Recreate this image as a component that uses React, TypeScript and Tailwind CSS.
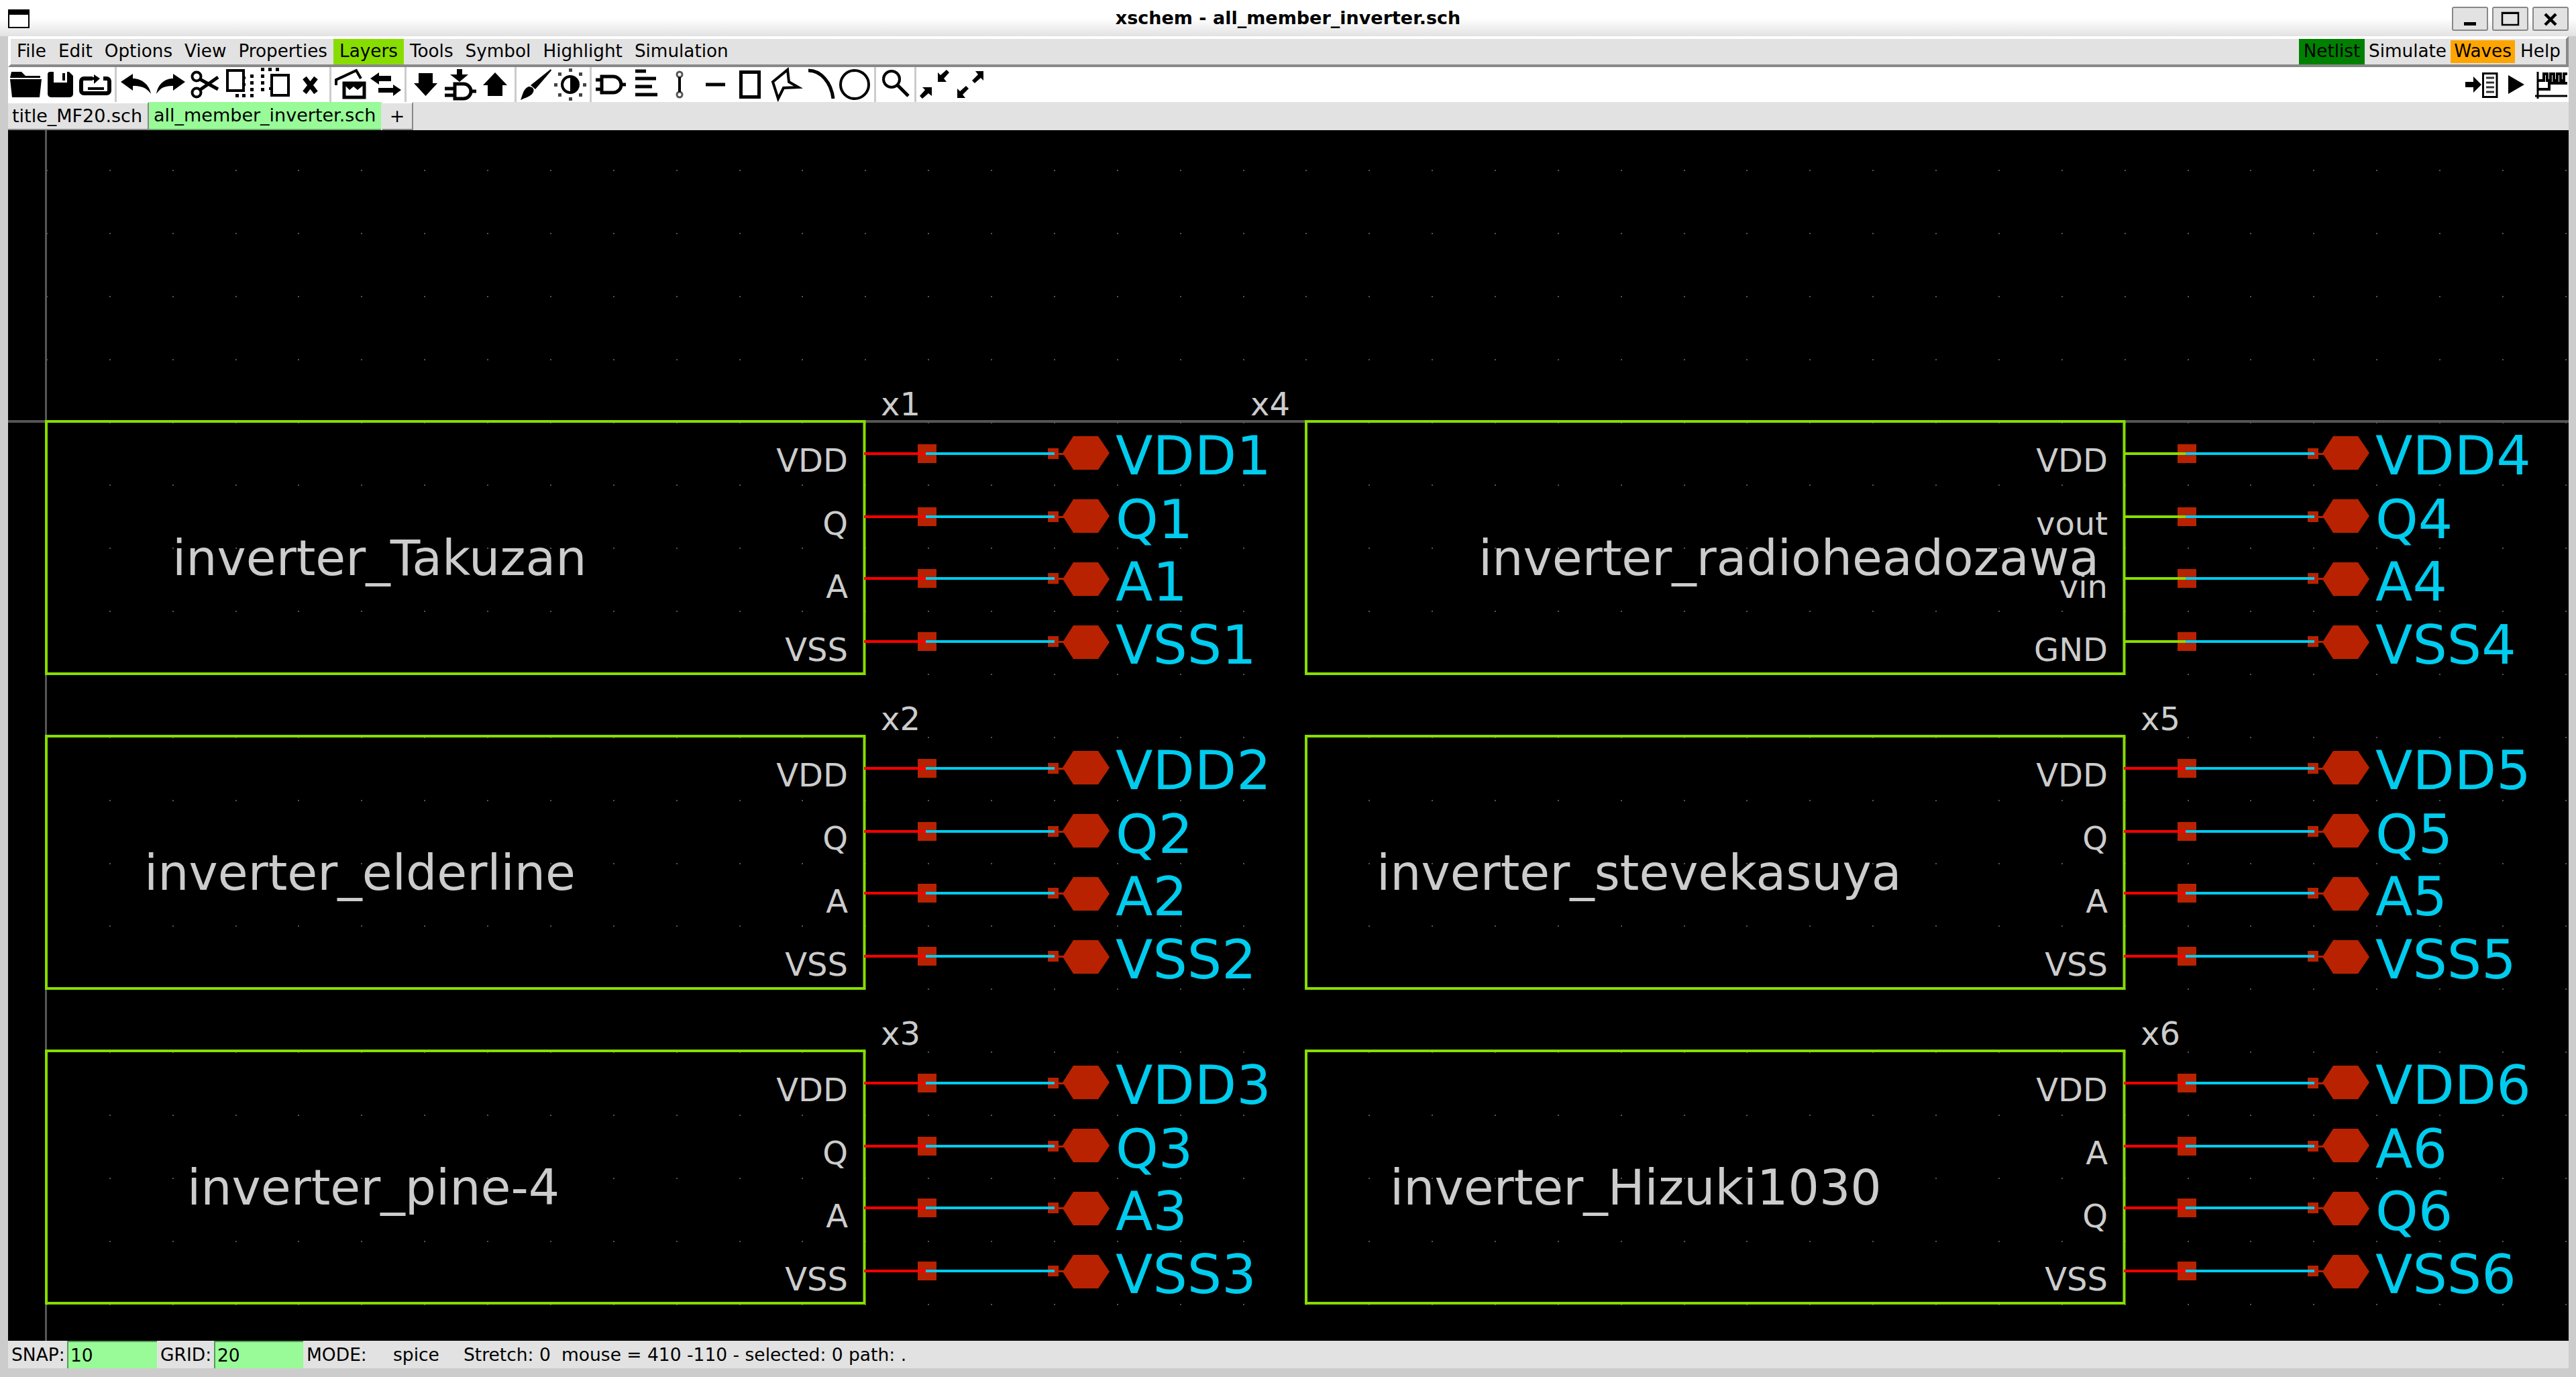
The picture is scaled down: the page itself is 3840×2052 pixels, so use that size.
import React from 'react';

const menuLeft = ['File', 'Edit', 'Options', 'View', 'Properties', 'Layers', 'Tools', 'Symbol', 'Highlight', 'Simulation'];

const Icon = ({ children }: { children: React.ReactNode }) => (
  <div className="w-[52px] h-full flex items-center justify-center shrink-0">
    <svg viewBox="0 0 48 48" className="w-[48px] h-[48px] overflow-visible">
      {children}
    </svg>
  </div>
);

const Sep = () => (
  <div className="w-[8px] h-full flex justify-center shrink-0">
    <div className="w-[3px] h-full bg-[#cccccc]" />
  </div>
);

const line = { fill: 'none', stroke: '#000', strokeWidth: 5 };

const Toolbar = () => (
  <div className="h-[52px] bg-white flex items-stretch pr-[1px] shrink-0">
    <Icon>
      <path d="M3 5h15l6 6h22v3H1zM1 16h47l-3 27H4z" />
    </Icon>
    <Icon>
      <path d="M9 5h28l6 6v27a5 5 0 0 1-5 5H10a5 5 0 0 1-5-5V9a4 4 0 0 1 4-4z" />
      <path d="M14 5h20v16H14z" fill="#fff" />
      <path d="M27 7h4v11h-4z" />
    </Icon>
    <Icon>
      <path d="M20 15H7a4 4 0 0 0-4 4v14a4 4 0 0 0 4 4h34a4 4 0 0 0 4-4V19a4 4 0 0 0-4-4h-5" {...line} strokeWidth={6} />
      <path d="M22 9l9 6-9 8zM22 13h-4v4h4z" />
      <path d="M13 30h24" stroke="#000" strokeWidth={4} />
    </Icon>
    <Sep />
    <Icon>
      <path d="M2 20L20 8v7c14 0 25 10 27 23-7-10-15-12-27-12v7z" />
    </Icon>
    <Icon>
      <path d="M46 20L28 8v7C14 15 5 25 3 38c7-10 13-12 25-12v7z" />
    </Icon>
    <Icon>
      <circle cx="11" cy="12" r="6.5" {...line} strokeWidth={4} />
      <circle cx="11" cy="36" r="6.5" {...line} strokeWidth={4} />
      <path d="M16 16l27 15M16 32l27-19" {...line} strokeWidth={5} />
    </Icon>
    <Icon>
      <rect x="5" y="3" width="24" height="30" {...line} strokeWidth={4} />
      <path d="M39 9h5v5h-5zM39 19h5v5h-5zM39 29h5v5h-5zM39 38h5v5h-5zM17 38h5v5h-5zM27 38h5v5h-5z" />
      <path d="M29 12h3v4h-3zM29 22h3v4h-3z" />
    </Icon>
    <Icon>
      <rect x="19" y="10" width="25" height="30" {...line} strokeWidth={4} />
      <path d="M3 -1h5v5H3zM3 9h5v5H3zM3 19h5v5H3zM3 29h5v5H3zM14 -1h5v5h-5zM25 -1h5v5h-5zM15 28h4v4h-4z" />
    </Icon>
    <Icon>
      <path d="M16 14l17 22M33 14L16 36" {...line} strokeWidth={7} />
    </Icon>
    <Sep />
    <Icon>
      <path d="M3 25v-8L33 3l7 12" {...line} strokeWidth={4} />
      <rect x="15" y="22" width="30" height="21" {...line} />
      <path d="M15 24l8 8 6-5 6 5 10-8z" />
    </Icon>
    <Icon>
      <path d="M2 15l13-9v5h18v8H15v5zM48 32l-12-8v5H14v7h22v5z" />
    </Icon>
    <Sep />
    <Icon>
      <path d="M14 7h21v15h7L24.500 41 7 22h7z" />
    </Icon>
    <Icon>
      <path d="M19 1h8v8h9L23 20 9 9h10z" />
      <path d="M16 23h13a11 11 0 0 1 0 22H16z" {...line} />
      <path d="M1 30h15M1 40h15M40 34h8" {...line} />
    </Icon>
    <Icon>
      <path d="M24 6l18 19h-7v16H13V25H6z" />
    </Icon>
    <Sep />
    <Icon>
      <path d="M47 1l1 2-24 28-7-6z" />
      <path d="M14 27c6 0 9 4 7 8-3 7-13 9-19 12 3-7 4-17 12-20z" />
    </Icon>
    <Icon>
      <circle cx="24" cy="24" r="12" fill="#fff" stroke="#000" strokeWidth={4} />
      <path d="M24 12a12 12 0 0 1 0 24z" />
      <path
        d="M22 0h5v5h-5zM22 43h5v5h-5zM0 22h5v5H0zM43 22h5v5h-5zM6 6h5v5H6zM37 6h5v5h-5zM6 37h5v5H6zM37 37h5v5h-5z"
        fill="#444"
      />
    </Icon>
    <Sep />
    <Icon>
      <path d="M11 12h17a12 12 0 0 1 0 24H11z" {...line} />
      <path d="M2 17h9M2 31h9M39 24h8" {...line} />
    </Icon>
    <Icon>
      <path d="M9 4h16M9 15h31M9 27h25M9 39h33" {...line} />
    </Icon>
    <Icon>
      <circle cx="23" cy="9" r="4" {...line} stroke="#555" strokeWidth={3} />
      <circle cx="23" cy="39" r="4" {...line} stroke="#555" strokeWidth={3} />
      <path d="M23 13v22" {...line} strokeWidth={4} />
    </Icon>
    <Icon>
      <path d="M10 24h29" {...line} />
    </Icon>
    <Icon>
      <rect x="10.500" y="5.500" width="27" height="37" {...line} strokeWidth={5} />
    </Icon>
    <Icon>
      <path d="M6 20L28 2l2 18 14 8-22 1-8 16z" {...line} strokeWidth={4} />
    </Icon>
    <Icon>
      <path d="M7 3c18 0 34 17 37 42" {...line} />
    </Icon>
    <Icon>
      <circle cx="24" cy="24" r="21" {...line} strokeWidth={4} />
    </Icon>
    <Sep />
    <Icon>
      <circle cx="19" cy="16" r="12" {...line} strokeWidth={4} />
      <path d="M28 25l16 16" {...line} />
    </Icon>
    <Sep />
    <Icon>
      <path d="M28 20V6l4 4 9-8 4 4-8 9 4 5zM19 28H5l4 4-8 9 4 4 9-8 5 4z" />
    </Icon>
    <Icon>
      <path d="M44 4v14l-4-4-9 8-4-4 9-9-4-5zM5 44V30l4 4 9-8 4 4-9 9 4 5z" />
    </Icon>
    <div className="ml-auto flex shrink-0">
      <Icon>
        <path d="M1 20h12v-8l12 12-12 12v-8H1z" />
        <rect x="27.500" y="7.500" width="20.500" height="35" {...line} strokeWidth={3} />
        <path d="M32 14h12M32 21h12M32 28h12M32 35h12" {...line} stroke="#333" strokeWidth={3} />
      </Icon>
      <Icon>
        <path d="M13 10l24 14-24 14z" />
      </Icon>
      <Icon>
        <path d="M5 5v40M1 41h48" {...line} strokeWidth={3} />
        <path d="M5 18h9V8h5v10h5V8h5v10h5V8h5v10h5V8h5" {...line} strokeWidth={4} />
        <path d="M5 31h17v-9h27" {...line} strokeWidth={4} />
      </Icon>
    </div>
  </div>
);

// schematic symbols, coordinates are page pixels (viewBox is offset to match)
type Sym = {
  x: number;
  y: number;
  inst: string;
  instX?: number;
  name: string;
  nameX: number;
  pins: string[];
  nets: string[];
  green?: boolean;
};

const symbols: Sym[] = [
  { x: 0, y: 0, inst: 'x1', name: 'inverter_Takuzan', nameX: 257, pins: ['VDD', 'Q', 'A', 'VSS'], nets: ['VDD1', 'Q1', 'A1', 'VSS1'] },
  { x: 0, y: 469, inst: 'x2', name: 'inverter_elderline', nameX: 215, pins: ['VDD', 'Q', 'A', 'VSS'], nets: ['VDD2', 'Q2', 'A2', 'VSS2'] },
  { x: 0, y: 938, inst: 'x3', name: 'inverter_pine-4', nameX: 279, pins: ['VDD', 'Q', 'A', 'VSS'], nets: ['VDD3', 'Q3', 'A3', 'VSS3'] },
  { x: 1878, y: 0, inst: 'x4', instX: -14, name: 'inverter_radioheadozawa', nameX: 2204, pins: ['VDD', 'vout', 'vin', 'GND'], nets: ['VDD4', 'Q4', 'A4', 'VSS4'], green: true },
  { x: 1878, y: 469, inst: 'x5', name: 'inverter_stevekasuya', nameX: 2052, pins: ['VDD', 'Q', 'A', 'VSS'], nets: ['VDD5', 'Q5', 'A5', 'VSS5'] },
  { x: 1878, y: 938, inst: 'x6', name: 'inverter_Hizuki1030', nameX: 2072, pins: ['VDD', 'A', 'Q', 'VSS'], nets: ['VDD6', 'A6', 'Q6', 'VSS6'] },
];

const wireY = [676, 770, 862, 956];
const hexY = [675, 769, 863, 957];
const pinBase = [703, 797, 891, 985];
const netBase = [707, 802, 895, 989];

const SymbolBlock = ({ s }: { s: Sym }) => (
  <g transform={`translate(${s.x} ${s.y})`}>
    <rect x={69} y={628} width={1219.500} height={376} fill="none" stroke="#88dd00" strokeWidth={4} />
    <text x={s.instX ?? 1313} y={619} className="fill-[#cccccc] text-[48px]">
      {s.inst}
    </text>
    <text x={s.nameX - s.x} y={857} className="fill-[#cccccc] text-[73px]">
      {s.name}
    </text>
    {s.pins.map((p, i) => (
      <g key={i}>
        <text x={1264} y={pinBase[i]} textAnchor="end" className="fill-[#cccccc] text-[48px]">
          {p}
        </text>
        <rect x={1368} y={wireY[i] - 14} width={28} height={28} fill="#b82200" />
        <rect x={1562} y={wireY[i] - 8} width={16} height={16} fill="#b82200" />
        <rect x={1578} y={wireY[i] - 1} width={10} height={3} fill="#b82200" />
        <path
          d={`M1584 ${hexY[i]}l16-25h37l17 25-17 25h-37z`}
          fill="#b82200"
        />
        <rect x={1288} y={wireY[i] - 2} width={94} height={4} fill={s.green ? '#88dd00' : '#ff0000'} />
        <rect x={1380} y={wireY[i] - 2} width={192} height={4} fill="#00ccee" />
        <text x={1663} y={netBase[i]} className="fill-[#00ccee] text-[81px]">
          {s.nets[i]}
        </text>
      </g>
    ))}
  </g>
);

const dots: { x: number; y: number }[] = [];
for (let k = 0; k < 41; k++) {
  for (let j = -4; j < 15; j++) {
    dots.push({ x: Math.round(69 + k * 93.87), y: Math.round(628.500 + j * 93.87) });
  }
}

const Canvas = () => (
  <div className="flex-1 bg-black relative overflow-hidden">
    <svg viewBox="12 194 3817 1804" className="absolute inset-0 w-full h-full">
      {dots.map((d, i) => (
        <rect key={i} x={d.x} y={d.y} width={2} height={2} fill="#555555" />
      ))}
      <rect x={67} y={194} width={3} height={1804} fill="#555555" />
      <rect x={12} y={626} width={3817} height={4} fill="#555555" />
      {symbols.map((s) => (
        <SymbolBlock key={s.inst} s={s} />
      ))}
    </svg>
  </div>
);

const App = () => {
  return (
    <div className="w-[3840px] h-[2052px] flex flex-col overflow-hidden bg-[#cccccc] text-black text-[26.500px] font-['DejaVu_Sans',sans-serif]">
      {/* window title bar */}
      <div className="h-[54px] shrink-0 relative flex items-center justify-center bg-linear-to-b from-white from-50% to-[#e2e2e2] font-bold text-[27px]">
        <div className="absolute left-[12px] top-[14px] w-[32px] h-[28px] bg-white border-2 border-black border-t-[8px]" />
        <span>xschem - all_member_inverter.sch</span>
        <div className="absolute right-[11px] top-[10px] flex gap-[6px]">
          <button className="w-[54px] h-[36px] bg-[#e2e2e2] border-2 border-[#888888] rounded-[3px] flex items-center justify-center">
            <svg viewBox="0 0 54 36" className="w-[54px] h-[36px] -m-[2px]">
              <path d="M18 23h18v5H18z" />
            </svg>
          </button>
          <button className="w-[54px] h-[36px] bg-[#e2e2e2] border-2 border-[#888888] rounded-[3px] flex items-center justify-center">
            <svg viewBox="0 0 54 36" className="w-[54px] h-[36px] -m-[2px]">
              <rect x="15" y="9" width="24" height="18" fill="none" stroke="#000" strokeWidth="2.500" />
              <path d="M14 8h26v3H14z" />
            </svg>
          </button>
          <button className="w-[54px] h-[36px] bg-[#e2e2e2] border-2 border-[#888888] rounded-[3px] flex items-center justify-center">
            <svg viewBox="0 0 54 36" className="w-[54px] h-[36px] -m-[2px]">
              <path d="M19 11l16 16M35 11L19 27" fill="none" stroke="#000" strokeWidth="4.500" />
            </svg>
          </button>
        </div>
      </div>

      <div className="flex-1 flex flex-col min-h-0 ml-[12px] mr-[11px] mb-[13px]">
        {/* menu bar */}
        <div className="h-[46px] shrink-0 flex bg-[#e2e2e2] border-4 border-t-white border-l-white border-r-[#888888] border-b-[#888888] box-border text-[26.250px]">
          {menuLeft.map((m) => (
            <div
              key={m}
              className={`px-[9px] flex items-center ${m === 'Layers' ? 'bg-[#88dd00]' : ''}`}
            >
              {m}
            </div>
          ))}
          <div className="ml-auto flex">
            <div className="w-[98px] flex items-center justify-center bg-[#008000]">Netlist</div>
            <div className="w-[128px] flex items-center justify-center">Simulate</div>
            <div className="w-[96px] my-[2px] flex items-center justify-center bg-[#ffa500]">Waves</div>
            <div className="w-[76px] flex items-center justify-center">Help</div>
          </div>
        </div>

        <Toolbar />

        {/* schematic tabs */}
        <div className="h-[42px] shrink-0 flex bg-[#e2e2e2] text-[27px]">
          <div className="h-full pl-[6px] w-[210px] flex items-center bg-[#e2e2e2] border-t-2 border-t-white border-b-2 border-b-[#888888] border-r-2 border-r-[#888888] whitespace-nowrap">
            title_MF20.sch
          </div>
          <div className="h-full w-[346px] px-[7px] flex items-center bg-[#98fb98] border-b-2 border-b-[#6aa96a] whitespace-nowrap">
            all_member_inverter.sch
          </div>
          <div className="h-full w-[46px] ml-[2px] flex items-center justify-center bg-[#e2e2e2] border-t-2 border-t-white border-b-2 border-b-[#888888] border-r-2 border-r-[#888888]">
            +
          </div>
        </div>

        <Canvas />

        {/* status bar */}
        <div className="h-[41px] shrink-0 flex items-stretch bg-[#e2e2e2] whitespace-pre">
          <span className="w-[88px] pl-[5px] flex items-center">SNAP:</span>
          <div className="w-[134px] pl-[3px] flex items-center bg-[#98fb98] border-t-2 border-t-[#5a9a5a] border-l-2 border-l-[#5a9a5a]">
            10
          </div>
          <span className="w-[85px] pl-[5px] flex items-center">GRID:</span>
          <div className="w-[133px] pl-[3px] flex items-center bg-[#98fb98] border-t-2 border-t-[#5a9a5a] border-l-2 border-l-[#5a9a5a]">
            20
          </div>
          <span className="w-[134px] pl-[5px] flex items-center">MODE:</span>
          <span className="w-[105px] flex items-center">spice</span>
          <span className="w-[146px] flex items-center">Stretch: 0</span>
          <span className="flex items-center">mouse = 410 -110 - selected: 0 path: .</span>
        </div>
      </div>
    </div>
  );
};

export default App;
